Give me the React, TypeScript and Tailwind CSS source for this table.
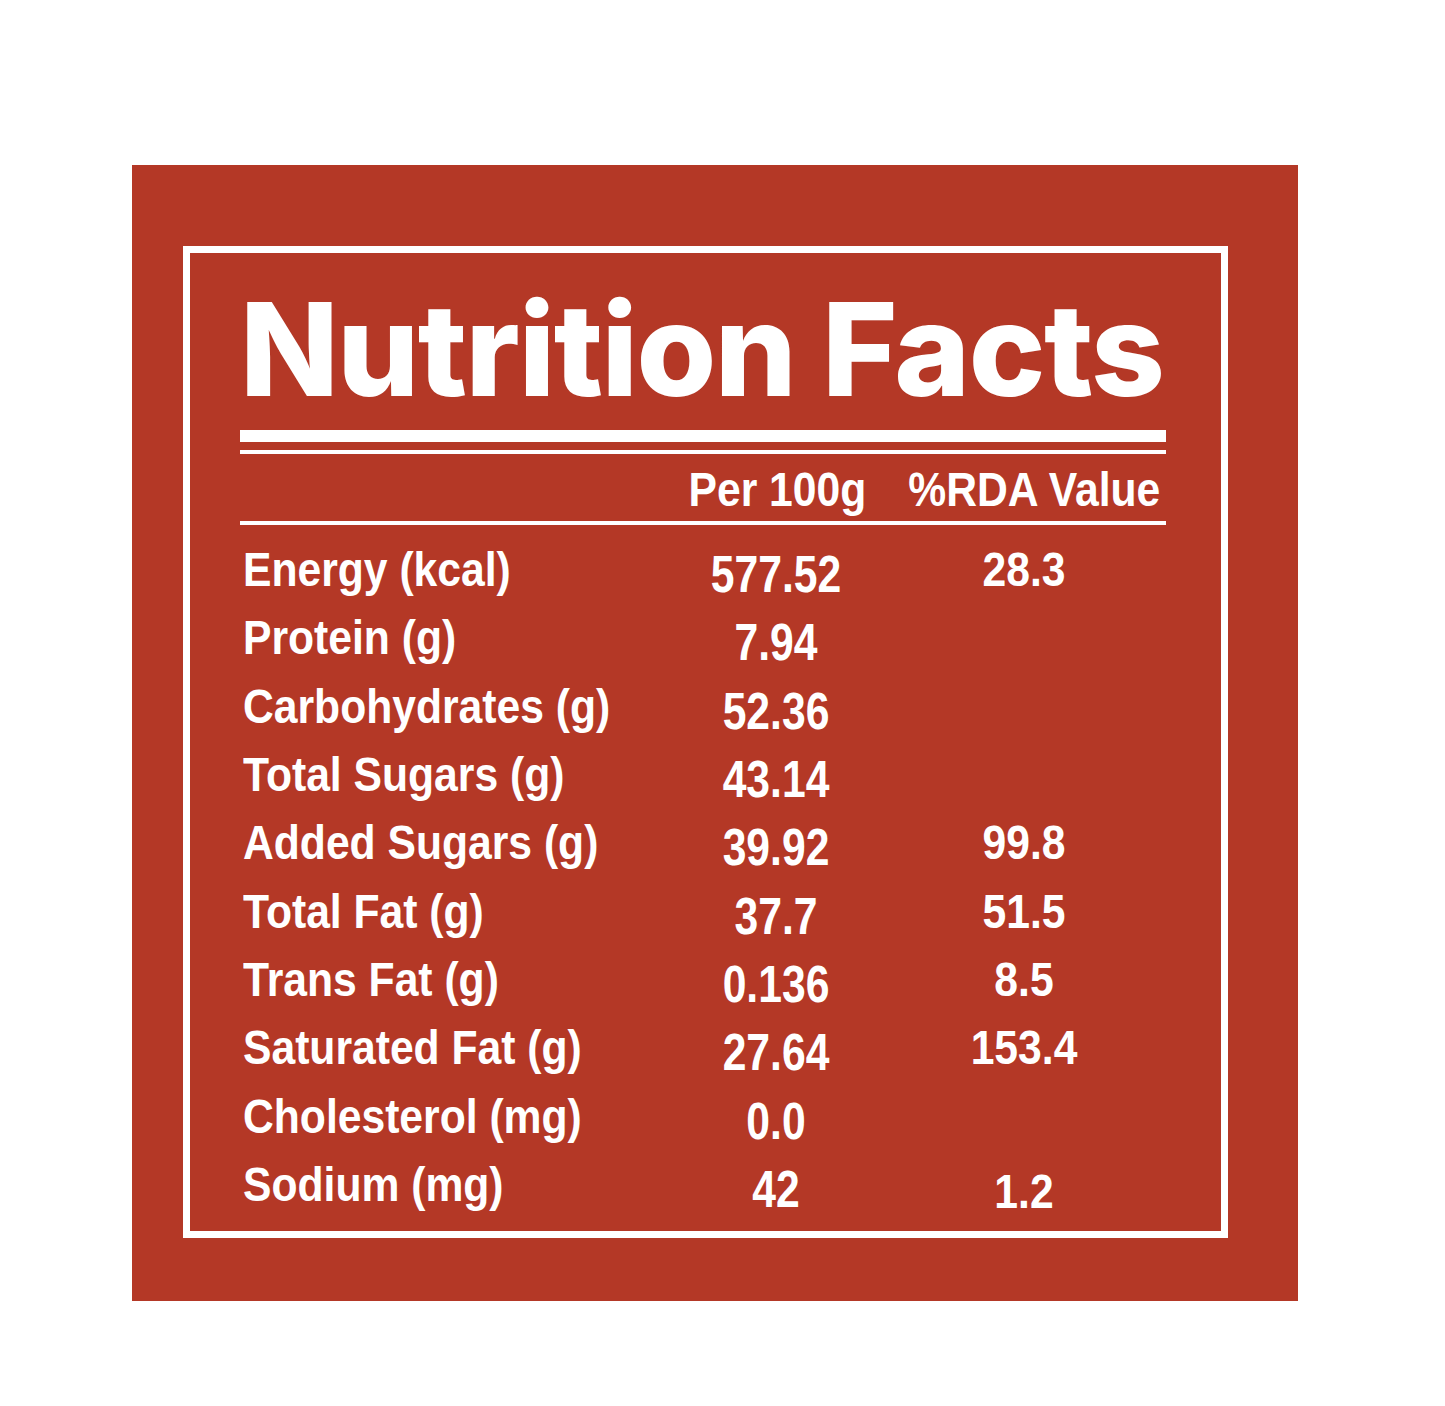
const rows = [
  { label: 'Energy (kcal)', per100: '577.52', rda: '28.3' },
  { label: 'Protein (g)', per100: '7.94', rda: '' },
  { label: 'Carbohydrates (g)', per100: '52.36', rda: '' },
  { label: 'Total Sugars (g)', per100: '43.14', rda: '' },
  { label: 'Added Sugars (g)', per100: '39.92', rda: '99.8' },
  { label: 'Total Fat (g)', per100: '37.7', rda: '51.5' },
  { label: 'Trans Fat (g)', per100: '0.136', rda: '8.5' },
  { label: 'Saturated Fat (g)', per100: '27.64', rda: '153.4' },
  { label: 'Cholesterol (mg)', per100: '0.0', rda: '' },
  { label: 'Sodium (mg)', per100: '42', rda: '1.2' },
]

// condensed look: Arial-metric bold squeezed horizontally
const narrow = "font-['Liberation_Sans',Arial,sans-serif] font-bold text-[52px] leading-none whitespace-nowrap"

export default function App() {
  return (
    <div className="min-h-[1406px] w-[1445px] bg-white pt-[165px] pl-[132px]">
      <div className="w-[1166px] h-[1136px] bg-[#b43826] pt-[81px] pl-[51px]">
        <div className="w-[1045px] h-[992px] border-[7px] border-white pl-[50px] pt-[32px] text-white">
          <div className="w-[926px]">
            <h1 className="font-['Inter',sans-serif] font-extrabold text-[129px] leading-none tracking-[-1.5px] whitespace-nowrap">
              Nutrition Facts
            </h1>
            <div className="mt-[16px] h-[12px] bg-white" />
            <div className="mt-[8px] h-[4px] bg-white" />
            <div className="mt-[8px] grid grid-cols-[440px_194px_286px]">
              <div />
              <div className="flex justify-center">
                <span className={`${narrow} scale-x-[0.82] scale-y-[0.93] origin-[50%_44px]`}>Per 100g</span>
              </div>
              <div className="flex justify-end">
                <span className={`${narrow} scale-x-[0.82] scale-y-[0.93] origin-[100%_44px]`}>%RDA Value</span>
              </div>
            </div>
            <div className="mt-[7px] h-[4px] bg-white" />
            <div className="mt-[17px]">
              {rows.map((row) => (
                <div key={row.label} className="grid grid-cols-[440px_192px_304px] h-[68.33px]">
                  <div className={`${narrow} pl-[3px] scale-x-[0.82] scale-y-[0.93] origin-[3px_44px]`}>{row.label}</div>
                  <div className={`${narrow} pt-[6px] text-center scale-x-[0.82] origin-[50%_50px]`}>{row.per100}</div>
                  <div
                    className={`${narrow} text-center scale-x-[0.82] scale-y-[0.93] origin-[50%_44px] ${
                      row.label === 'Sodium (mg)' ? 'pt-[7px]' : ''
                    }`}
                  >
                    {row.rda}
                  </div>
                </div>
              ))}
            </div>
          </div>
        </div>
      </div>
    </div>
  )
}
